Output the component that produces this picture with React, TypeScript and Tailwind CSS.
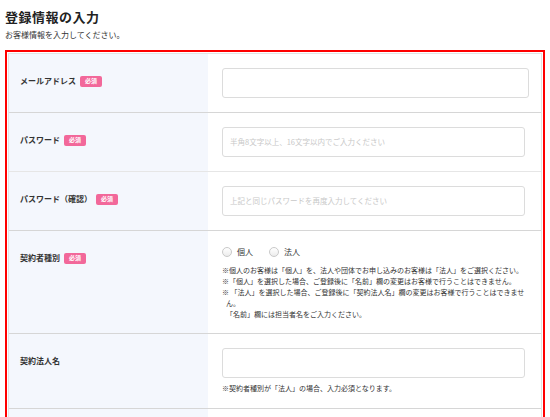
const FONT = "font-['Noto_Sans_CJK_JP','Noto_Sans',sans-serif]";

function Badge() {
  return (
    <span className="ml-[4px] inline-flex h-[11px] items-center rounded-[2px] bg-[#f2689a] px-[5px] text-[6px] font-bold leading-none text-white">
      必須
    </span>
  );
}

function Label({ text, required }: { text: string; required?: boolean }) {
  return (
    <div className="w-[199px] shrink-0 bg-[#f4f7fd] pl-[11px] pt-[21px]">
      <div className="flex h-[12px] items-center text-[8px] font-bold text-[#333]">
        <span>{text}</span>
        {required && <Badge />}
      </div>
    </div>
  );
}

function Input({ placeholder, w }: { placeholder?: string; w: string }) {
  return (
    <div
      className={`flex h-[30px] items-center rounded-[3px] border border-[#dcdcdc] bg-white pl-[7px] text-[7.5px] text-[#c8c8c8] ${w}`}
    >
      {placeholder}
    </div>
  );
}

function Radio({ label }: { label: string }) {
  return (
    <label className="flex items-center gap-[5px] text-[8px] text-[#333]">
      <span className="h-[10px] w-[10px] rounded-full border border-[#c9c9c9] bg-gradient-to-b from-white to-[#ececec]" />
      {label}
    </label>
  );
}

const NOTES = [
  "※個人のお客様は「個人」を、法人や団体でお申し込みのお客様は「法人」をご選択ください。",
  "※「個人」を選択した場合、ご登録後に「名前」欄の変更はお客様で行うことはできません。",
];

export default function App() {
  return (
    <div className={`h-[417px] w-[550px] overflow-hidden bg-white px-[5px] pt-[9px] ${FONT}`}>
      <h1 className="text-[13px] font-bold leading-[16px] tracking-[0.5px] text-[#222]">登録情報の入力</h1>
      <p className="mt-[5px] text-[8px] leading-[10px] text-[#333]">お客様情報を入力してください。</p>

      <div className="mt-[10px] border-2 border-[#ff0000] p-[1px]">
        <div className="border border-[#e3e3e3]">
          {/* email */}
          <div className="flex border-b border-[#d6d6d6]">
            <Label text="メールアドレス" required />
            <div className="flex-1 py-[14px] pl-[14px]">
              <Input w="w-[307px]" />
            </div>
          </div>

          {/* password */}
          <div className="flex border-b border-[#e6e6e6]">
            <Label text="パスワード" required />
            <div className="flex-1 py-[14px] pl-[14px]">
              <Input w="w-[303px]" placeholder="半角8文字以上、16文字以内でご入力ください" />
            </div>
          </div>

          {/* password confirm */}
          <div className="flex border-b border-[#d6d6d6]">
            <Label text="パスワード（確認）" required />
            <div className="flex-1 py-[14px] pl-[14px]">
              <Input w="w-[303px]" placeholder="上記と同じパスワードを再度入力してください" />
            </div>
          </div>

          {/* contract type */}
          <div className="flex border-b border-[#d6d6d6]">
            <Label text="契約者種別" required />
            <div className="flex-1 pb-[13px] pl-[14px] pr-[10px] pt-[15px]">
              <div className="flex h-[12px] items-center gap-[16px]">
                <Radio label="個人" />
                <Radio label="法人" />
              </div>
              <ul className="mt-[7px] text-[7px] leading-[11px] text-[#333]">
                {NOTES.map((n) => (
                  <li key={n}>{n}</li>
                ))}
                <li className="pl-[4px] -indent-[4px]">
                  ※ 「法人」を選択した場合、ご登録後に「契約法人名」欄の変更はお客様で行うことはできません。
                  <br />
                  「名前」欄には担当者名をご入力ください。
                </li>
              </ul>
            </div>
          </div>

          {/* corporate name */}
          <div className="flex border-b border-[#d6d6d6]">
            <Label text="契約法人名" />
            <div className="flex-1 py-[14px] pl-[14px]">
              <Input w="w-[303px]" />
              <p className="mt-[5px] text-[7px] leading-[11px] text-[#333]">
                ※契約者種別が「法人」の場合、入力必須となります。
              </p>
            </div>
          </div>

          {/* next row, only its top edge is on screen */}
          <div className="flex h-[60px]">
            <div className="w-[199px] shrink-0 bg-[#f4f7fd]" />
            <div className="flex-1" />
          </div>
        </div>
      </div>
    </div>
  );
}
